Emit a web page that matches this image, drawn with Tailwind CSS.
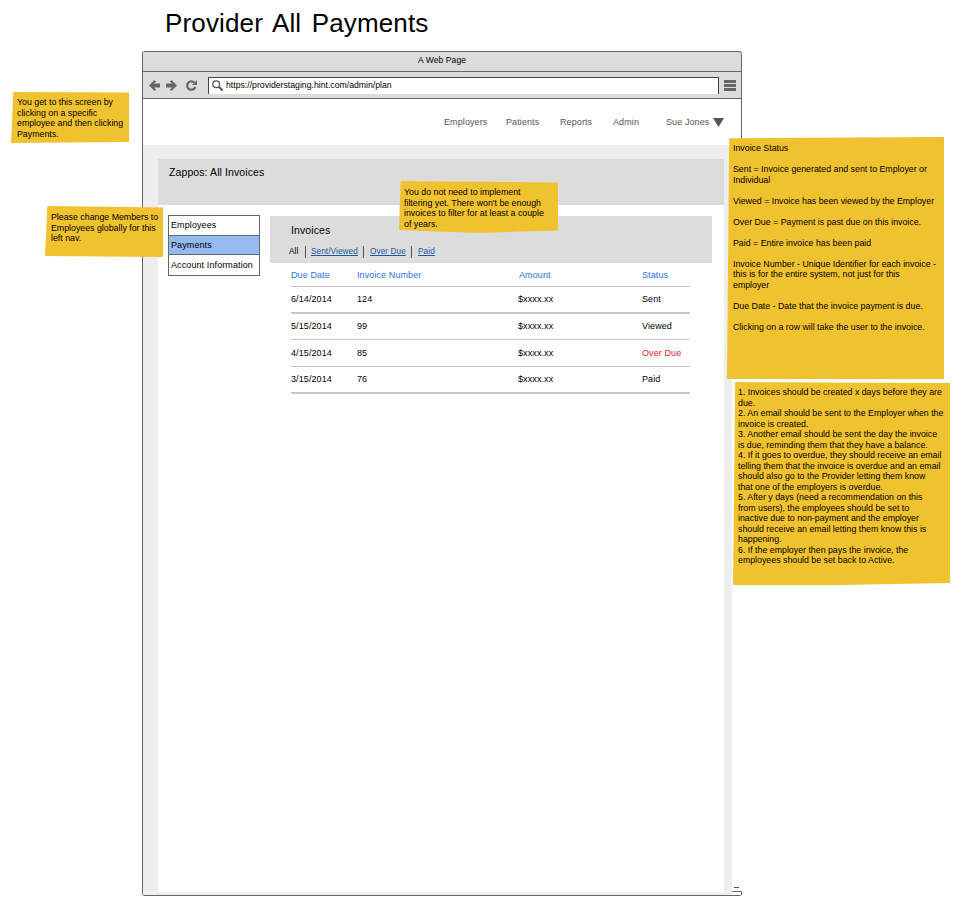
<!DOCTYPE html>
<html lang="en">
<head>
    <meta charset="UTF-8">
    <title>Provider All Payments</title>
    <script src="https://cdn.jsdelivr.net/npm/@tailwindcss/browser@4"></script>
</head>
<body class="relative h-[906px] w-[961px] overflow-hidden bg-white font-['Liberation_Sans',sans-serif] text-[9px] leading-[10.5px] tracking-[0.1px] whitespace-nowrap text-black">
    <h1 class="ml-[165px] h-[51px] pt-[6px] text-[26px] leading-[34px] font-normal tracking-[0.15px] [word-spacing:3px]">Provider All Payments</h1>

    <!-- browser window -->
    <div class="relative ml-[142px] flex h-[845px] w-[600px] flex-col rounded-[3px] border-t border-b border-l border-[#666] bg-white">
        <div class="flex h-[20px] items-center justify-center rounded-tr-[3px] border-r border-b border-[#666] bg-[#dcdcdc] pb-[3px] text-[8.500px]">A Web Page</div>
        <div class="flex h-[27px] items-center border-r border-b border-[#666] bg-[#dcdcdc] pl-[6px]">
            <svg class="h-[11px] w-[11px]" viewBox="0 0 11 11" fill="#666"><path d="M0 5.500L5.500 0l1.500 1.500L5 3.500h6v4H5l2 2L5.500 11z"/></svg>
            <svg class="ml-[6px] h-[11px] w-[11px]" viewBox="0 0 11 11" fill="#666"><path d="M11 5.500L5.500 0 4 1.500l2 2H0v4h6l-2 2L5.500 11z"/></svg>
            <svg class="ml-[9px] h-[11px] w-[11px]" viewBox="0 0 11 11" fill="none" stroke="#666" stroke-width="2.200"><path d="M9.300 7A4.200 4.200 0 1 1 8.300 2.500"/><path d="M11 0v5H6z" fill="#666" stroke="none"/></svg>
            <div class="ml-[11px] flex h-[17px] w-[511px] items-center border border-b-0 border-[#444] bg-white pl-[3px]">
                <svg class="h-[11px] w-[11px]" viewBox="0 0 11 11" fill="none" stroke="#555" stroke-width="1.200"><circle cx="4.200" cy="4.200" r="3.400"/><path d="M6.800 6.800l3.700 3.700" stroke-width="2"/></svg>
                <span class="ml-[3px] text-[8.700px] tracking-normal">https://providerstaging.hint.com/admin/plan</span>
            </div>
            <div class="ml-[5px] flex w-[12px] flex-col gap-[1px]">
                <div class="h-[3px] bg-[#666]"></div>
                <div class="h-[3px] bg-[#666]"></div>
                <div class="h-[3px] bg-[#666]"></div>
            </div>
        </div>

        <nav class="flex h-[46px] items-center border-r border-[#666] pl-[301px] text-[#555]">
            <span class="w-[62px]">Employers</span>
            <span class="w-[54px]">Patients</span>
            <span class="w-[53px]">Reports</span>
            <span class="w-[53px]">Admin</span>
            <span class="w-[47px]">Sue Jones</span>
            <svg class="h-[9px] w-[11px]" viewBox="0 0 11 9" fill="#555"><path d="M0 0h11L5.500 9z"/></svg>
        </nav>

        <div class="w-[589px] flex-1 bg-[#eeeeee] pt-[14px] pb-[3px] pl-[15px]">
            <div class="h-full w-[566px] bg-white">
                <div class="h-[46px] bg-[#dcdcdc] pt-[7px] pl-[11px] text-[10.500px] leading-[12px]">Zappos: All Invoices</div>
                <div class="flex pt-[10px] pl-[10px]">
                    <ul class="h-[61px] w-[92px] border border-[#666] leading-[19px]">
                        <li class="h-[20px] border-b border-[#666] pl-[2px]">Employees</li>
                        <li class="h-[19px] border-b border-[#666] bg-[#93bbf2] pl-[2px]">Payments</li>
                        <li class="pl-[2px] leading-[20px]">Account Information</li>
                    </ul>
                    <div class="mt-[1px] ml-[10px] w-[442px]">
                        <div class="h-[47px] bg-[#dcdcdc] pt-[8px] pl-[19px]">
                            <h2 class="ml-[2px] text-[10.500px] leading-[12px] font-normal">Invoices</h2>
                            <div class="mt-[10px] flex h-[12px] text-[8.200px] leading-[12px]">
                                <span class="w-[17px] border-r border-[#555]">All</span>
                                <a class="w-[58px] border-r border-[#555] pl-[5px] text-[#1a5a9e] underline">Sent/Viewed</a>
                                <a class="w-[48px] border-r border-[#555] pl-[6px] text-[#1a5a9e] underline">Over Due</a>
                                <a class="pl-[6px] text-[#1a5a9e] underline">Paid</a>
                            </div>
                        </div>
                        <div class="ml-[21px] w-[399px]">
                            <div class="grid h-[24px] grid-cols-[66px_161px_124px_48px] items-center border-b border-[#c8c8c8] pt-[2px] text-[#2a6fe0]">
                                <span>Due Date</span><span>Invoice Number</span><span class="pl-[1px]">Amount</span><span>Status</span>
                            </div>
                            <div class="grid h-[27px] grid-cols-[66px_161px_124px_48px] items-center border-b-2 border-[#c8c8c8]">
                                <span>6/14/2014</span><span>124</span><span>$xxxx.xx</span><span>Sent</span>
                            </div>
                            <div class="grid h-[26px] grid-cols-[66px_161px_124px_48px] items-center border-b border-[#c8c8c8]">
                                <span>5/15/2014</span><span>99</span><span>$xxxx.xx</span><span>Viewed</span>
                            </div>
                            <div class="grid h-[27px] grid-cols-[66px_161px_124px_48px] items-center border-b border-[#c8c8c8]">
                                <span>4/15/2014</span><span>85</span><span>$xxxx.xx</span><span class="text-[#e0202a]">Over Due</span>
                            </div>
                            <div class="grid h-[27px] grid-cols-[66px_161px_124px_48px] items-center border-b-2 border-[#c8c8c8]">
                                <span>3/15/2014</span><span>76</span><span>$xxxx.xx</span><span>Paid</span>
                            </div>
                        </div>
                    </div>
                </div>
            </div>
        </div>

        <!-- scrollbar stub at the bottom right corner -->
        <div class="absolute right-0 bottom-0 h-[4px] w-[10px] rounded-tr-[1px] border-t border-r border-[#666]"></div>
        <div class="absolute right-[3px] bottom-[7px] h-[1px] w-[5px] bg-[#555]"></div>
    </div>

    <!-- sticky notes over the wireframe -->
    <div class="absolute top-[91px] left-[11px] h-[52px] w-[118px] bg-[#f1c22f] pt-[6px] pl-[6px] text-[8.800px] tracking-normal [clip-path:polygon(2%_2%,100%_3%,100%_98%,0_100%)]">You get to this screen by<br>clicking on a specific<br>employee and then clicking<br>Payments.</div>
    <div class="absolute top-[206px] left-[45px] h-[52px] w-[118px] bg-[#f1c22f] pt-[6px] pl-[6px] text-[8.800px] tracking-normal [clip-path:polygon(2%_0,100%_3%,100%_98%,0_96%)]">Please change Members to<br>Employees globally for this<br>left nav.</div>
    <div class="absolute top-[181px] left-[399px] h-[52px] w-[159px] bg-[#f1c22f] pt-[6px] pl-[5px] text-[8.800px] tracking-normal [clip-path:polygon(1%_0,100%_3%,100%_95%,50%_100%,0_94%)]">You do not need to implement<br>filtering yet. There won't be enough<br>invoices to filter for at least a couple<br>of years.</div>
    <div class="absolute top-[137px] left-[727px] h-[242px] w-[217px] bg-[#f1c22f] pt-[6px] pl-[6px] text-[8.800px] tracking-normal [clip-path:polygon(1%_0.500%,100%_0,100%_100%,0_100%)]">Invoice Status<br><br>Sent = Invoice generated and sent to Employer or<br>Individual<br><br>Viewed = Invoice has been viewed by the Employer<br><br>Over Due = Payment is past due on this invoice.<br><br>Paid = Entire invoice has been paid<br><br>Invoice Number - Unique Identifier for each invoice -<br>this is for the entire system, not just for this<br>employer<br><br>Due Date - Date that the invoice payment is due.<br><br>Clicking on a row will take the user to the invoice.</div>
    <div class="absolute top-[382px] left-[733px] h-[203px] w-[217px] bg-[#f1c22f] pt-[5px] pl-[5px] text-[8.800px] tracking-normal [clip-path:polygon(1%_0,100%_0.500%,100%_99%,50%_100%,0_100%)]">1. Invoices should be created x days before they are<br>due.<br>2. An email should be sent to the Employer when the<br>invoice is created.<br>3. Another email should be sent the day the invoice<br>is due, reminding them that they have a balance.<br>4. If it goes to overdue, they should receive an email<br>telling them that the invoice is overdue and an email<br>should also go to the Provider letting them know<br>that one of the employers is overdue.<br>5. After y days (need a recommendation on this<br>from users), the employees should be set to<br>inactive due to non-payment and the employer<br>should receive an email letting them know this is<br>happening.<br>6. If the employer then pays the invoice, the<br>employees should be set back to Active.</div>
</body>
</html>
